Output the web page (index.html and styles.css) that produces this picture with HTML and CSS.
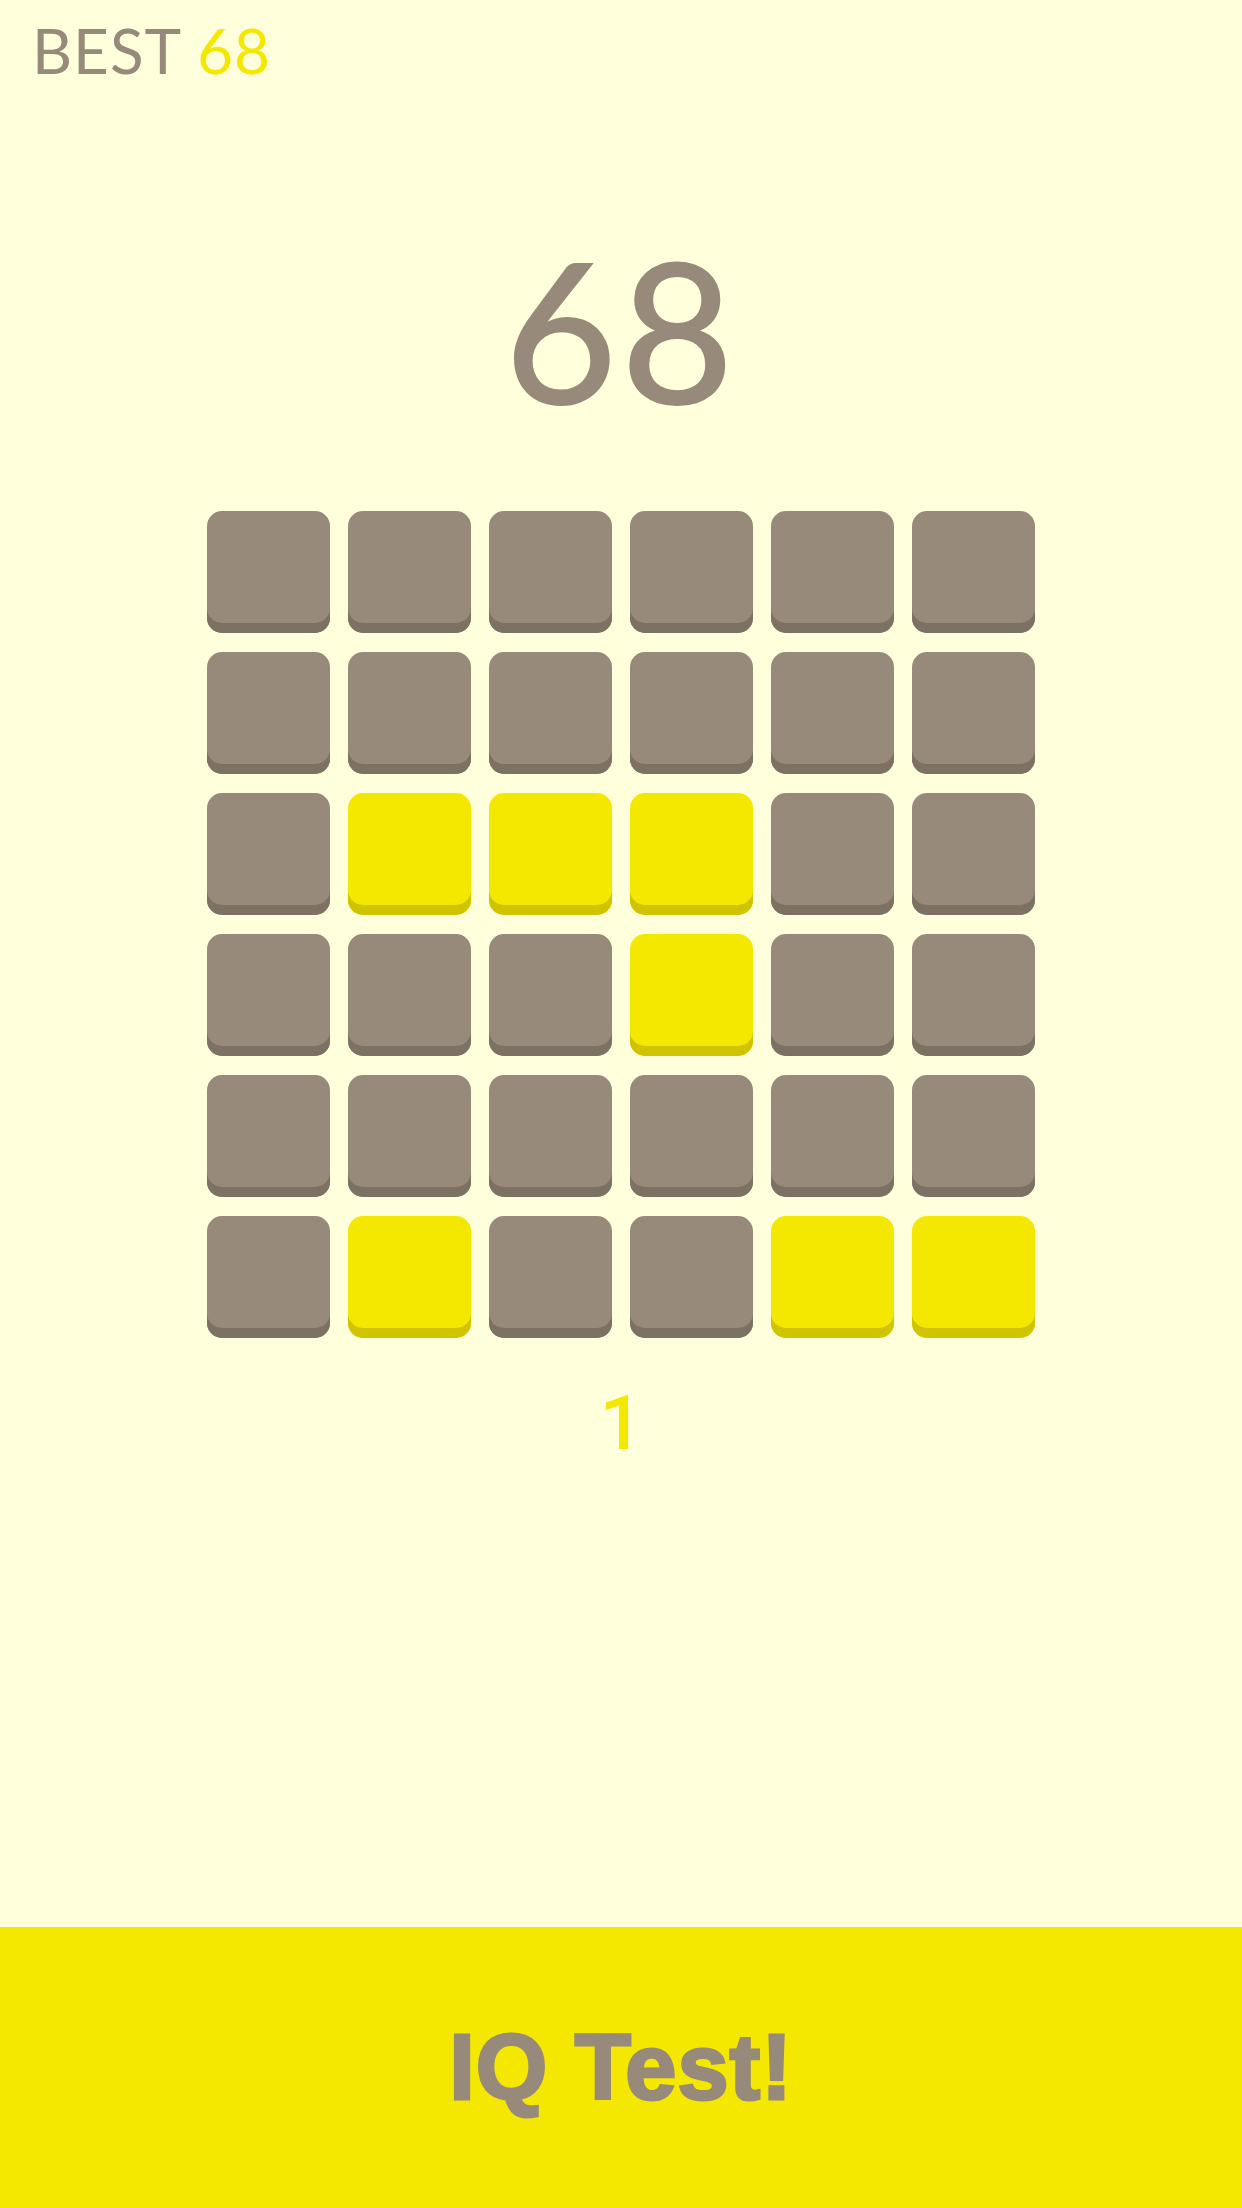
FILE: index.html
```html
<!DOCTYPE html>
<html>
<head>
<meta charset="utf-8">
<link rel="stylesheet" href="styles.css">
</head>
<body>
<div class="screen">
  <div class="best"><span class="best-label">BEST</span> <span class="best-value">68</span></div>
  <div class="score">68</div>
  <div class="board">
    <div class="tile"></div><div class="tile"></div><div class="tile"></div><div class="tile"></div><div class="tile"></div><div class="tile"></div>
    <div class="tile"></div><div class="tile"></div><div class="tile"></div><div class="tile"></div><div class="tile"></div><div class="tile"></div>
    <div class="tile"></div><div class="tile on"></div><div class="tile on"></div><div class="tile on"></div><div class="tile"></div><div class="tile"></div>
    <div class="tile"></div><div class="tile"></div><div class="tile"></div><div class="tile on"></div><div class="tile"></div><div class="tile"></div>
    <div class="tile"></div><div class="tile"></div><div class="tile"></div><div class="tile"></div><div class="tile"></div><div class="tile"></div>
    <div class="tile"></div><div class="tile on"></div><div class="tile"></div><div class="tile"></div><div class="tile on"></div><div class="tile on"></div>
  </div>
  <div class="level">1</div>
  <div class="cta">IQ Test!</div>
</div>
</body>
</html>
```

FILE: styles.css
```css
html, body {
  margin: 0;
  padding: 0;
  background: #FFFFDC;
}
.screen {
  width: 1242px;
  height: 2208px;
  display: flex;
  flex-direction: column;
  align-items: center;
  background: #FFFFDC;
  overflow: hidden;
}
.best {
  align-self: flex-start;
  margin-top: 19px;
  padding-left: 32px;
  font-family: Lato, "Open Sans", sans-serif;
  font-weight: 400;
  font-size: 62px;
  line-height: 63px;
  letter-spacing: 1px;
}
.best-label { color: #978A7A; }
.best-value { color: #F5E800; }
.score {
  margin-top: 150px;
  font-family: Lato, "Open Sans", sans-serif;
  font-size: 194px;
  line-height: 192px;
  color: #978A7A;
  -webkit-text-stroke: 2px #978A7A;
  letter-spacing: 4px;
}
.board {
  margin-top: 87px;
  display: grid;
  grid-template-columns: repeat(6, 123px);
  grid-auto-rows: 122px;
  column-gap: 18.2px;
  row-gap: 19px;
}
.tile {
  border-radius: 15px;
  background: #978A7A;
  box-shadow: inset 0 -10px 0 #7C7163;
}
.tile.on {
  background: #F5E800;
  box-shadow: inset 0 -10px 0 #D0C300;
}
.level {
  margin-top: 47px;
  font-family: Roboto, "Noto Sans", sans-serif;
  font-weight: 500;
  font-size: 76px;
  line-height: 76px;
  color: #F5E800;
}
.cta {
  margin-top: auto;
  align-self: stretch;
  height: 281px;
  background: #F5E800;
  display: flex;
  align-items: center;
  justify-content: center;
  font-family: "Liberation Sans", Arial, sans-serif;
  font-weight: 700;
  font-size: 92px;
  letter-spacing: 1px;
  color: #978A7A;
  -webkit-text-stroke: 3px #978A7A;
}
```
